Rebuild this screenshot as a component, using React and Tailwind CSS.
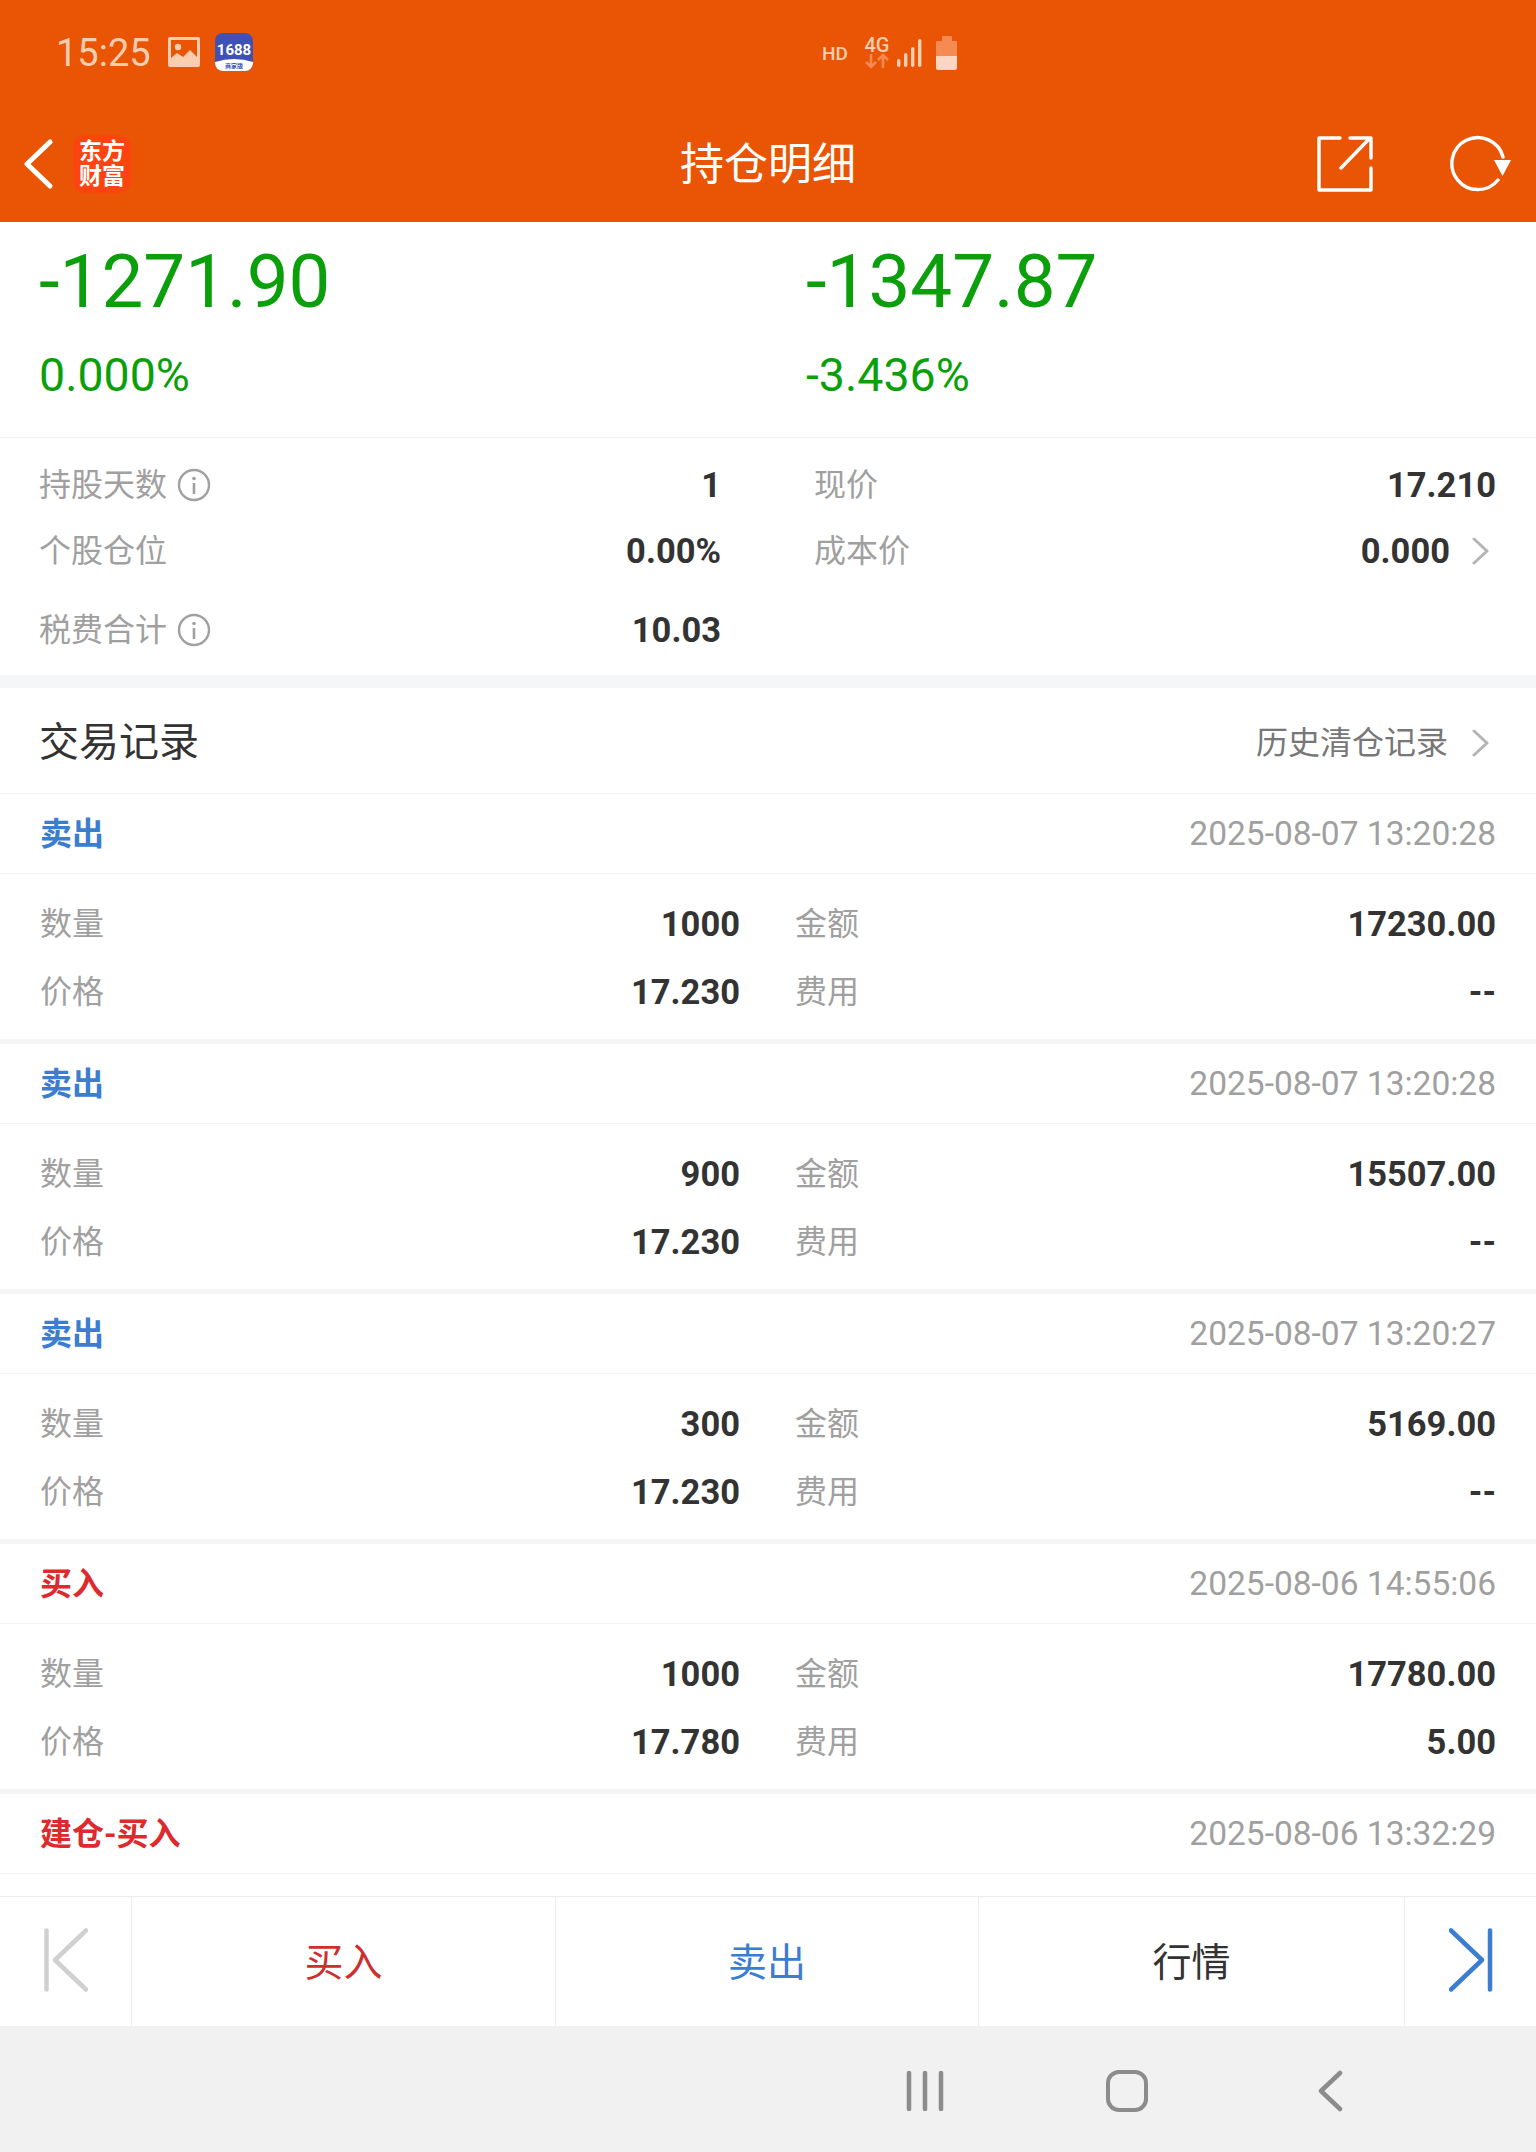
const font = { fontFamily: 'Roboto, "Noto Sans CJK SC", sans-serif' };

const trades = [
  { type: '卖出', color: 'text-[#3a7dd1]', time: '2025-08-07 13:20:28', qty: '1000', amount: '17230.00', price: '17.230', fee: '--' },
  { type: '卖出', color: 'text-[#3a7dd1]', time: '2025-08-07 13:20:28', qty: '900', amount: '15507.00', price: '17.230', fee: '--' },
  { type: '卖出', color: 'text-[#3a7dd1]', time: '2025-08-07 13:20:27', qty: '300', amount: '5169.00', price: '17.230', fee: '--' },
  { type: '买入', color: 'text-[#dc2a2e]', time: '2025-08-06 14:55:06', qty: '1000', amount: '17780.00', price: '17.780', fee: '5.00' },
];

const InfoIcon = () => (
  <svg width="34" height="34" viewBox="0 0 34 34" fill="none" className="ml-[10px]">
    <circle cx="17" cy="17" r="15" stroke="#a0a0a0" strokeWidth="2.4" />
    <circle cx="17" cy="10.5" r="1.8" fill="#a0a0a0" />
    <path d="M17 15v11" stroke="#a0a0a0" strokeWidth="2.6" />
  </svg>
);

const Chevron = ({ className }) => (
  <svg width="18" height="28" viewBox="0 0 18 28" fill="none" className={className}>
    <path d="M2 2l13 12L2 26" stroke="#b4b4b4" strokeWidth="3" strokeLinecap="round" strokeLinejoin="round" />
  </svg>
);

const StatusBar = () => (
  <div className="h-[106px] flex items-center pl-[56px]">
    <span className="w-[112px] text-[38px] leading-none text-[#fbcdb0]">15:25</span>
    <svg width="32" height="30" viewBox="0 0 32 30" className="-mt-[2px]">
      <rect width="32" height="30" rx="2" fill="#fbcdb0" />
      <rect x="3" y="3" width="26" height="24" fill="#e95504" />
      <circle cx="10" cy="10" r="3.2" fill="#fbcdb0" />
      <path d="M3 27v-6l6-5 6 4 7-7 7 7v7z" fill="#fbcdb0" />
    </svg>
    <svg width="38" height="38" viewBox="0 0 38 38" className="ml-[15px] -mt-[2px]">
      <rect width="38" height="38" rx="8" fill="#3f51b5" />
      <path d="M0 29q19-6 38 0v1a8 8 0 0 1-8 8H8a8 8 0 0 1-8-8z" fill="#fff" />
      <text x="19" y="22" textAnchor="middle" fontSize="15" fontWeight="700" fill="#fff" fontFamily="Roboto">1688</text>
      <text x="19" y="35" textAnchor="middle" fontSize="6" fontWeight="700" fill="#3f51b5" fontFamily="Noto Sans CJK SC">商家版</text>
    </svg>
    <span className="ml-[569px] w-[42px] text-[19px] leading-none font-medium text-[#fbcdb0]">HD</span>
    <div className="flex flex-col items-center w-[26px]">
      <span className="text-[20px] leading-[15px] font-medium text-[#fbcdb0]">4G</span>
      <svg width="26" height="16" viewBox="0 0 26 16" fill="none" stroke="#f58a52" strokeWidth="2.6">
        <path d="M7 1v13M2 9l5 5 5-5M19 15V2M14 7l5-5 5 5" />
      </svg>
    </div>
    <svg width="30" height="30" viewBox="0 0 30 30" fill="#fbcdb0" className="ml-[6px]">
      <rect x="1" y="21" width="3.4" height="8" rx="1.7" />
      <rect x="8" y="15" width="3.4" height="14" rx="1.7" />
      <rect x="15" y="9" width="3.4" height="20" rx="1.7" />
      <rect x="22" y="1" width="3.4" height="28" rx="1.7" />
    </svg>
    <svg width="22" height="34" viewBox="0 0 22 34" className="ml-[10px]">
      <rect x="6" width="10" height="6" rx="1" fill="#f58a52" />
      <rect y="5" width="21" height="15" rx="1" fill="#f58a52" />
      <path d="M0 20h21v12a2 2 0 0 1-2 2H2a2 2 0 0 1-2-2z" fill="#fcd6c2" />
    </svg>
  </div>
);

const NavBar = () => (
  <div className="h-[116px] flex items-center">
    <svg width="32" height="50" viewBox="0 0 32 50" fill="none" className="ml-[22px]">
      <path d="M28 3L5 25l23 22" stroke="#fff" strokeWidth="5" strokeLinecap="round" strokeLinejoin="round" />
    </svg>
    <div className="ml-[19px] w-[58px] h-[58px] rounded-[12px] bg-[#fc4410] flex items-center justify-center text-white text-[23px] leading-[25px] font-bold text-center">
      <span>东方<br />财富</span>
    </div>
    <div className="flex-1 text-center text-[44px] leading-none text-white pl-[88px] pt-[2px]">持仓明细</div>
    <svg width="56" height="56" viewBox="0 0 56 56" fill="none" stroke="#fff" strokeWidth="3.4" strokeLinecap="round" className="mr-[77px]">
      <path d="M23 2H2v52h52V32M24 32L53 2M33 2h21v20" strokeLinejoin="round" />
    </svg>
    <svg width="62" height="58" viewBox="0 0 62 58" fill="none" className="mr-[24px]">
      <path d="M53 22A26 26 0 1 0 48 45" stroke="#fff" strokeWidth="3.4" strokeLinecap="round" />
      <path d="M44 25h17l-8.500 16z" fill="#fff" />
    </svg>
  </div>
);

const HeroCol = ({ value, percent }) => (
  <div className="text-[#0c9f0c]">
    <div className="h-[80px] flex items-center pt-[1px] text-[74.5px] leading-none">{value}</div>
    <div className="mt-[28px] h-[50px] flex items-center text-[46.5px] leading-none">{percent}</div>
  </div>
);

const Row = ({ label, value, info, className, children }) => (
  <div className={`flex items-center justify-between ${className}`}>
    <span className="flex items-center text-[32px] leading-none text-[#a0a0a0]">
      {label}
      {info && <InfoIcon />}
    </span>
    <span className="flex items-center text-[34.5px] leading-none font-bold text-[#333]">
      {value}
      {children}
    </span>
  </div>
);

const TradeItem = ({ trade }) => (
  <div className="border-b-[5px] border-[#f5f5f5]">
    <div className="h-[80px] flex items-center justify-between px-[40px] border-b border-[#f4f4f4]">
      <span className={`text-[32px] leading-none font-bold ${trade.color}`}>{trade.type}</span>
      <span className="text-[33.5px] leading-none text-[#a0a0a0]">{trade.time}</span>
    </div>
    <div className="grid grid-cols-[700px_701px] gap-x-[55px] pl-[40px] pt-[16px] pb-[13px]">
      <Row className="h-[68px]" label="数量" value={trade.qty} />
      <Row className="h-[68px]" label="金额" value={trade.amount} />
      <Row className="h-[68px]" label="价格" value={trade.price} />
      <Row className="h-[68px]" label="费用" value={trade.fee} />
    </div>
  </div>
);

const Footer = () => (
  <div className="h-[130px] flex border-t border-[#ececec] bg-white">
    <div className="w-[132px] flex items-center pl-[44px] pb-[4px] border-r border-[#ececec]">
      <svg width="44" height="64" viewBox="0 0 44 64" fill="none" stroke="#d0d0d0" strokeWidth="4.5" strokeLinecap="round" strokeLinejoin="round">
        <path d="M2.500 2.500v59M42 2.500L11 32l31 29.500" />
      </svg>
    </div>
    <div className="w-[424px] flex items-center justify-center pt-[3px] text-[39px] text-[#cf2e2e] border-r border-[#ececec]">买入</div>
    <div className="w-[423px] flex items-center justify-center pt-[3px] text-[39px] text-[#3a7dd1] border-r border-[#ececec]">卖出</div>
    <div className="w-[426px] flex items-center justify-center pt-[3px] text-[39px] text-[#333] border-r border-[#ececec]">行情</div>
    <div className="flex-1 flex items-center pl-[44px] pb-[4px]">
      <svg width="44" height="64" viewBox="0 0 44 64" fill="none" stroke="#3a7dd1" strokeWidth="4.5" strokeLinecap="round" strokeLinejoin="round">
        <path d="M41 2.500v59M2 2.500L33 32 2 61.500" />
      </svg>
    </div>
  </div>
);

const SystemNav = () => (
  <div className="h-[126px] bg-[#f1f1f1] flex items-center pt-[4px]">
    <svg width="38" height="40" viewBox="0 0 38 40" fill="none" stroke="#8c8c8c" strokeWidth="4.500" strokeLinecap="round" className="ml-[906px]">
      <path d="M3 2v36M19 2v36M35 2v36" />
    </svg>
    <div className="ml-[162px] w-[42px] h-[42px] rounded-[13px] border-[4.5px] border-[#8c8c8c]"></div>
    <svg width="26" height="42" viewBox="0 0 26 42" fill="none" stroke="#8c8c8c" strokeWidth="4.500" strokeLinecap="round" strokeLinejoin="round" className="ml-[169px]">
      <path d="M23 3L4 21l19 18" />
    </svg>
  </div>
);

export default function App() {
  return (
    <div className="w-[1536px] h-[2152px] flex flex-col bg-white" style={font}>
      <div className="bg-[#e95504]">
        <StatusBar />
        <NavBar />
      </div>

      <div className="grid grid-cols-[767px_1fr] pl-[39px] pt-[20px] pb-[37px] border-b border-[#f3f3f3]">
        <HeroCol value="-1271.90" percent="0.000%" />
        <HeroCol value="-1347.87" percent="-3.436%" />
      </div>

      <div className="grid grid-cols-[682px_682px] gap-x-[93px] pl-[39px] pt-[14px] pb-[12px]">
        <Row className="h-[66px]" label="持股天数" value="1" info />
        <Row className="h-[66px]" label="现价" value="17.210" />
        <Row className="h-[66px]" label="个股仓位" value="0.00%" />
        <Row className="h-[66px]" label="成本价" value="0.000">
          <Chevron className="ml-[22px] mr-[6px]" />
        </Row>
        <Row className="h-[66px] mt-[13px]" label="税费合计" value="10.03" info />
      </div>

      <div className="h-[13px] bg-[#f5f6f8]"></div>

      <div className="h-[106px] flex items-center justify-between pl-[39px] pr-[46px] pt-[4px] border-b border-[#f4f4f4]">
        <span className="text-[40px] leading-none text-[#333]">交易记录</span>
        <span className="flex items-center text-[32px] leading-none text-[#777]">
          历史清仓记录
          <Chevron className="ml-[24px]" />
        </span>
      </div>

      {trades.map((trade, i) => <TradeItem key={i} trade={trade} />)}

      <div className="h-[80px] flex items-center justify-between px-[40px] border-b border-[#f4f4f4]">
        <span className="text-[32px] leading-none font-bold text-[#dc2a2e]">建仓-买入</span>
        <span className="text-[33.5px] leading-none text-[#a0a0a0]">2025-08-06 13:32:29</span>
      </div>
      <div className="h-[22px]"></div>

      <Footer />
      <SystemNav />
    </div>
  );
}
